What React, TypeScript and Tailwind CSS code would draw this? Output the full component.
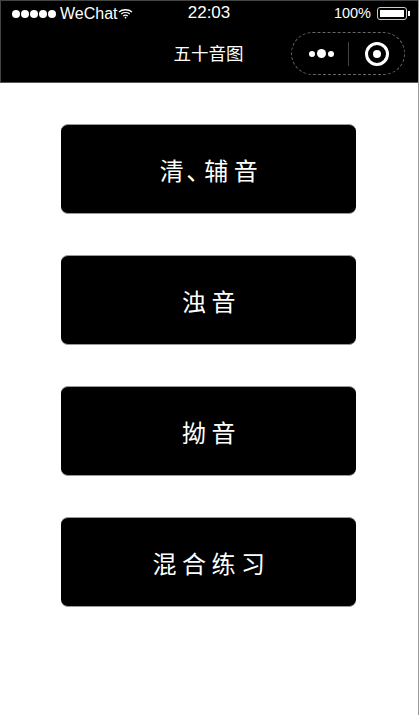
const labels = [["清", "、", "辅音"], ["浊音"], ["拗音"], ["混合练习"]];

function StatusBar() {
  return (
    <div className="flex h-[25px] items-center justify-between pl-[11px] pr-[8px] text-[16px] leading-[25px] text-white">
      <div className="flex w-[150px] items-center">
        <div className="flex gap-[1px]">
          {[0, 1, 2, 3, 4].map((i) => (
            <span key={i} className="h-[8px] w-[8px] rounded-full bg-white" />
          ))}
        </div>
        <span className="ml-[4px]">WeChat</span>
        <svg width="15" height="11" viewBox="0 0 15 11" fill="none" stroke="white" strokeWidth="1.3">
          <path d="M1 4 C4.5 1 10.5 1 14 4" />
          <path d="M3.2 6 C5.6 4.2 9.4 4.2 11.8 6" />
          <path d="M5.2 8 C6.6 7 8.4 7 9.8 8" />
          <circle cx="7.5" cy="9.6" r="0.9" fill="white" stroke="none" />
        </svg>
      </div>
      <span className="pb-[2px] pr-[4px] text-[17px]">22:03</span>
      <div className="flex w-[150px] items-center justify-end">
        <span className="text-[14.5px]">100%</span>
        <div className="ml-[6px] flex h-[13px] w-[30px] items-center rounded-[3px] border border-[#cccccc] p-[2px]">
          <div className="h-full w-full bg-white" />
        </div>
        <div className="ml-[1px] h-[5px] w-[2px] bg-white" />
      </div>
    </div>
  );
}

function NavBar() {
  return (
    <div className="relative flex h-[56px] items-center justify-center pr-[2px]">
      <span className="text-[17.5px] text-white">五十音图</span>
      <div className="absolute right-[13px] top-[6px] flex h-[43px] w-[114px] items-center rounded-full border border-dashed border-[#666666]">
        <div className="flex w-[56px] items-center justify-center gap-[2px] pl-[2px]">
          <span className="h-[6px] w-[6px] rounded-full bg-white" />
          <span className="h-[9px] w-[9px] rounded-full bg-white" />
          <span className="h-[6px] w-[6px] rounded-full bg-white" />
        </div>
        <div className="h-[24px] w-px bg-[#444444]" />
        <div className="flex flex-1 items-center justify-center">
          <div className="flex h-[24px] w-[24px] items-center justify-center rounded-full border-[3px] border-white">
            <div className="h-[8px] w-[8px] rounded-full bg-white" />
          </div>
        </div>
      </div>
    </div>
  );
}

export default function App() {
  return (
    <div className="h-[715px] w-[419px] border-r border-[#999999] bg-white font-['Liberation_Sans','Noto_Sans_CJK_SC',sans-serif]">
      <div className="h-[83px] border-b border-l border-t border-b-[#555555] border-l-[#444444] border-t-[#444444] bg-black">
        <StatusBar />
        <NavBar />
      </div>
      <div className="flex flex-col gap-[41px] pl-[61px] pt-[41px]">
        {labels.map((parts) => (
          <button
            key={parts.join("")}
            className="flex h-[90px] w-[295px] items-center justify-center rounded-[7px] border-y border-[#999999] bg-black pl-[6px] pt-[5px] text-[24px] tracking-[5.5px] text-white"
          >
            {parts.map((part) => (
              <span
                key={part}
                className={part === "、" ? "tracking-[-6px]" : part === "清" ? "tracking-[2.5px]" : ""}
              >
                {part}
              </span>
            ))}
          </button>
        ))}
      </div>
    </div>
  );
}
